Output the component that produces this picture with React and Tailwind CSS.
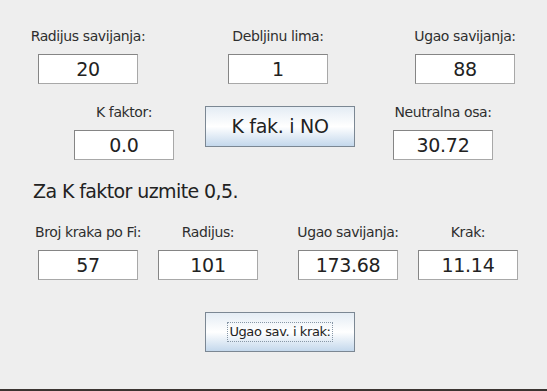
import React from "react";

const font = { fontFamily: '"DejaVu Sans", Verdana, sans-serif' };

function Field({ value, className = "" }) {
  return (
    <div
      className={`w-[100px] h-[30px] bg-white border border-[#858585] border-r-[#a8a8a8] border-b-[#a8a8a8] flex items-center justify-center text-[19px] text-[#222] tracking-[-0.3px] ${className}`}
    >
      {value}
    </div>
  );
}

function Labeled({ label, value, className = "" }) {
  return (
    <div className={`w-[100px] flex flex-col items-center ${className}`}>
      <div className="h-[20px] leading-[20px] text-[14px] text-[#2e2e2e] whitespace-nowrap tracking-[-0.4px]">
        {label}
      </div>
      <Field value={value} className="mt-[8px]" />
    </div>
  );
}

function Btn({ children, className = "" }) {
  return (
    <div
      className={`w-[150px] border border-[#7b8793] bg-gradient-to-b from-[#e4ecf4] via-white to-[#c4d8ec] flex items-center justify-center text-[#222] ${className}`}
    >
      {children}
    </div>
  );
}

export default function App() {
  return (
    <div
      style={font}
      className="w-[547px] h-[391px] bg-[#eeeeee] flex flex-col border-b-2 border-[#3b3431] overflow-hidden"
    >
      <div className="flex mt-[26px] pl-[38px]">
        <Labeled label="Radijus savijanja:" value="20" />
        <Labeled label="Debljinu lima:" value="1" className="ml-[90px]" />
        <Labeled label="Ugao savijanja:" value="88" className="ml-[87px]" />
      </div>
      <div className="flex items-start mt-[18px] pl-[74px]">
        <Labeled label="K faktor:" value="0.0" />
        <Btn className="ml-[31px] mt-[4px] h-[41px] text-[19px] tracking-[-0.3px]">K fak. i NO</Btn>
        <Labeled label="Neutralna osa:" value="30.72" className="ml-[38px]" />
      </div>
      <div className="mt-[17px] pl-[33px] h-[28px] leading-[28px] text-[19px] text-[#222] tracking-[-0.6px]">
        Za K faktor uzmite 0,5.
      </div>
      <div className="flex mt-[17px] pl-[38px]">
        <Labeled label="Broj kraka po Fi:" value="57" />
        <Labeled label="Radijus:" value="101" className="ml-[20px]" />
        <Labeled label="Ugao savijanja:" value="173.68" className="ml-[40px]" />
        <Labeled label="Krak:" value="11.14" className="ml-[20px]" />
      </div>
      <div className="flex mt-[32px] pl-[205px]">
        <Btn className="h-[40px] text-[13px]">
          <span className="border border-dotted border-[#8797a6] px-[1px] leading-[18px] tracking-[-0.4px]">
            Ugao sav. i krak:
          </span>
        </Btn>
      </div>
    </div>
  );
}
